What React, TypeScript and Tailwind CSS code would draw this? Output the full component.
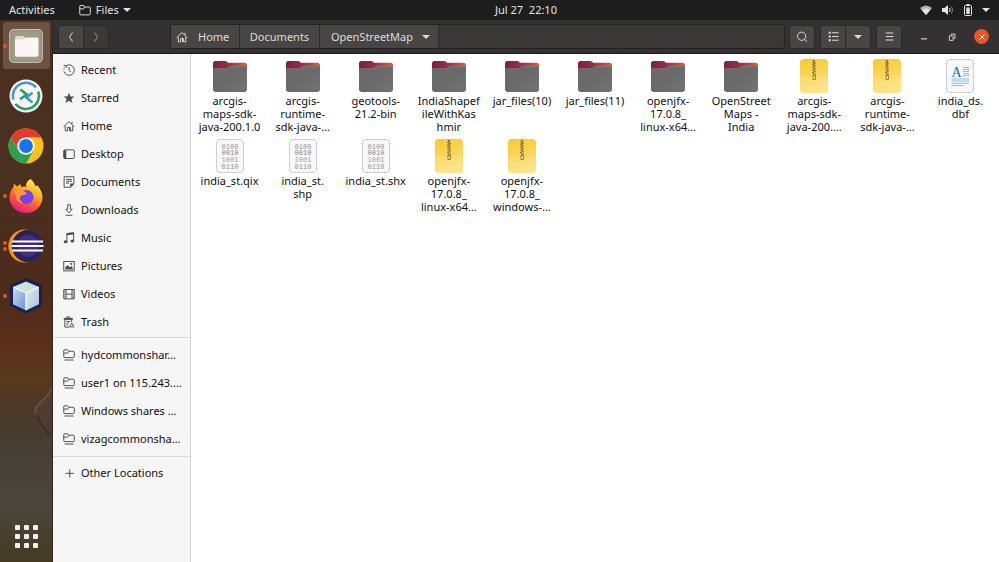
import type { ReactNode } from "react";

// Shared stroke icon wrapper, 16 unit grid
const Glyph = ({
  children,
  className = "size-3",
}: {
  children: ReactNode;
  className?: string;
}) => (
  <svg
    viewBox="0 0 16 16"
    className={`shrink-0 ${className}`}
    fill="none"
    stroke="currentColor"
    strokeWidth="1.3"
    aria-hidden
  >
    {children}
  </svg>
);

const Caret = () => (
  <svg viewBox="0 0 8 4" className="h-1 w-2 shrink-0" fill="currentColor" aria-hidden>
    <path d="M0 0h8L4 4z" />
  </svg>
);

const HomeGlyph = ({ className }: { className?: string }) => (
  <Glyph className={className}>
    <path d="M1 9l7-7 7 7M3 8v6.5h3.2V10h3.6v4.5H13V8" />
    <path d="M8.2 10.5h1.6v4H8.2z" fill="currentColor" stroke="none" />
    <path d="M12 2.5v3" />
  </Glyph>
);

const NetworkFolder = () => (
  <Glyph className="size-3">
    <path d="M1 10V2.2Q1 1 2.200 1H6l1.600 2h6q1.400 0 1.400 1.200v6q0 1.300-1.400 1.300H2.400Q1 11.500 1 10zM1 5.500h5L7.600 3.300" />
    <path d="M2 14.700h12" />
  </Glyph>
);

const places: { name: string; icon: ReactNode }[] = [
  {
    name: "Recent",
    icon: (
      <Glyph>
        <path d="M4 2.4A7 7 0 1 1 1.3 10" />
        <path d="M1.2 8A7 7 0 0 1 3 3.3" strokeDasharray="1.4 1.2" />
        <path d="M8 4v4.5l2.6 2M1 2h3.4v3.4" />
      </Glyph>
    ),
  },
  {
    name: "Starred",
    icon: (
      <Glyph>
        <path
          d="M8 1l2 5h5.3l-4.2 3.4 1.6 5.4L8 11.6l-4.7 3.2 1.6-5.4L.7 6H6z"
          fill="currentColor"
          stroke="none"
        />
      </Glyph>
    ),
  },
  { name: "Home", icon: <HomeGlyph /> },
  {
    name: "Desktop",
    icon: (
      <Glyph>
        <rect x="1" y="2.5" width="14" height="11.5" rx="1.5" />
        <path d="M1 3h3.4v10.8H1z" fill="currentColor" stroke="none" />
      </Glyph>
    ),
  },
  {
    name: "Documents",
    icon: (
      <Glyph>
        <path d="M1.5 1h13v9.5L10 15H1.5zM4 4.5h8M4 7h8M4 9.5h4" />
        <path d="M9.5 15v-5h5z" fill="currentColor" stroke="none" />
      </Glyph>
    ),
  },
  {
    name: "Downloads",
    icon: (
      <Glyph>
        <path d="M6.2 1h3.6v6h2.4L8 12 3.8 7h2.4zM3.5 15h9" />
      </Glyph>
    ),
  },
  {
    name: "Music",
    icon: (
      <Glyph>
        <path d="M5.2 12.8V2l9-1v10.8" />
        <path d="M5 1.8l9.4-1v2.6L5 4.4z" fill="currentColor" stroke="none" />
        <ellipse cx="3.5" cy="13" rx="2.5" ry="2" fill="currentColor" stroke="none" />
        <ellipse cx="12.5" cy="12" rx="2.5" ry="2" fill="currentColor" stroke="none" />
      </Glyph>
    ),
  },
  {
    name: "Pictures",
    icon: (
      <Glyph>
        <rect x="1" y="2" width="14" height="12.5" />
        <path
          d="M3 12.5V10l3-3.5 3 3 2-1.5 2.2 2.5v2zM9.8 4h2.4v2.4H9.8z"
          fill="currentColor"
          stroke="none"
        />
      </Glyph>
    ),
  },
  {
    name: "Videos",
    icon: (
      <Glyph>
        <path d="M1 2h14v12.5H1zM4 2v12.5M12 2v12.5M4 8.2h8" />
        <path d="M2.5 2v12.5M13.5 2v12.5" strokeDasharray="1.5 1.5" />
      </Glyph>
    ),
  },
  {
    name: "Trash",
    icon: (
      <Glyph>
        <path d="M5 3V1.200h4V3M2.500 5v9.800h5.500M11.500 5v3M4.800 7.300h4.700M4.800 9.600h3M4.800 12h2" />
        <path d="M1 2.600h12v2.600H1z" fill="currentColor" stroke="none" />
        <path d="M11.700 9.500l3 5h-6z" />
      </Glyph>
    ),
  },
];

const mounts = ["hydcommonshar…", "user1 on 115.243.…", "Windows shares …", "vizagcommonsha…"];

type Kind = "folder" | "zip" | "binary" | "text";

const files: { label: string; kind: Kind }[] = [
  { label: "arcgis-\nmaps-sdk-\njava-200.1.0", kind: "folder" },
  { label: "arcgis-\nruntime-\nsdk-java-…", kind: "folder" },
  { label: "geotools-\n21.2-bin", kind: "folder" },
  { label: "IndiaShapef\nileWithKas\nhmir", kind: "folder" },
  { label: "jar_files(10)", kind: "folder" },
  { label: "jar_files(11)", kind: "folder" },
  { label: "openjfx-\n17.0.8_\nlinux-x64…", kind: "folder" },
  { label: "OpenStreet\nMaps -\nIndia", kind: "folder" },
  { label: "arcgis-\nmaps-sdk-\njava-200.…", kind: "zip" },
  { label: "arcgis-\nruntime-\nsdk-java-…", kind: "zip" },
  { label: "india_ds.\ndbf", kind: "text" },
  { label: "india_st.qix", kind: "binary" },
  { label: "india_st.\nshp", kind: "binary" },
  { label: "india_st.shx", kind: "binary" },
  { label: "openjfx-\n17.0.8_\nlinux-x64…", kind: "zip" },
  { label: "openjfx-\n17.0.8_\nwindows-…", kind: "zip" },
];

const FileIcon = ({ kind }: { kind: Kind }) => (
  <svg viewBox="0 0 34 34" className="size-[34px]" aria-hidden>
    {kind === "folder" && (
      <>
        <path
          d="M0 12V4.5Q0 2 2.5 2H12q1.5 0 2.5 1.2l.6.6h16.4Q34 3.8 34 6.3V13H0z"
          fill="url(#folder-back)"
        />
        <path
          d="M0 10.5q0-1 1-1h12.2q1.4 0 2.4-1l.8-.8q.8-.8 2-.8H33q1 0 1 1V30q0 2.7-2.7 2.7H2.7Q0 32.7 0 30z"
          fill="url(#folder-front)"
        />
        <path d="M.6 31q.7 1.4 2.1 1.4h28.6q1.4 0 2.1-1.4" fill="none" stroke="#4c4c4c" strokeWidth=".6" />
        <path d="M.5 9.9h12.7q1.4 0 2.4-1l.8-.8q.8-.8 2-.8h15" fill="none" stroke="#8e8583" strokeWidth=".6" />
      </>
    )}
    {kind === "zip" && (
      <>
        <rect x="3" width="28" height="34" rx="3.5" fill="url(#zip-body)" />
        <path d="M3 17h28v13.500Q31 34 27.500 34h-21Q3 34 3 30.500z" fill="#fff" fillOpacity=".12" />
        <path
          d="M16 1l2 1.100-2 1.300 2 1.200-2 1.300 2 1.200-2 1.300 2 1.200-2 1.300 2 1.200-2 1.300 2 1.200-2 1.300"
          fill="none"
          stroke="#6f5f34"
          strokeWidth="1.200"
          strokeDasharray="1.600 .7"
        />
        <rect x="16" y="16.500" width="2.400" height="4" fill="none" stroke="#7d6c3c" strokeWidth=".8" />
      </>
    )}
    {(kind === "binary" || kind === "text") && (
      <rect x="3.500" y=".5" width="27" height="33" rx="3.500" fill="#f8f8f8" stroke="#cfcfcf" />
    )}
    {kind === "binary" && (
      <g fontFamily="'Liberation Mono', monospace" fontSize="7" textAnchor="middle">
        <text x="17" y="9.800" fill="#909090">0100</text>
        <text x="17" y="16.300" fill="#808080">0010</text>
        <text x="17" y="22.900" fill="#a0a0a0">1001</text>
        <text x="17" y="29.500" fill="#909090">0110</text>
      </g>
    )}
    {kind === "text" && (
      <>
        <text
          x="13.500"
          y="18"
          fill="#1d6cab"
          fontFamily="'Liberation Serif', serif"
          fontSize="14"
          textAnchor="middle"
        >
          A
        </text>
        <path
          d="M20 8.500h6M20 10.500h6M20 12.500h6M20 14.500h6M20 16.500h6M8.500 20h17.500M8.500 22h17.500M8.500 24.300h17.500M8.500 26.500h12"
          stroke="#7fc4ee"
        />
      </>
    )}
  </svg>
);

const FilesLogo = () => (
  <svg viewBox="0 0 34 34" className="size-[34px]" aria-hidden>
    <rect x=".7" y=".7" width="32.600" height="32.600" rx="4" fill="#8f8a75" stroke="#c3beab" strokeWidth="1.200" />
    <rect x="2.500" y="2.500" width="29" height="29" rx="3" fill="#a09b86" />
    <path d="M6 9q0-2 2-2h7l2 2.500V16H6z" fill="#dedacf" />
    <path d="M6 12q0-1.600 1.600-1.600h6.800q1 0 1.800-.8l.6-.5q.6-.6 1.500-.6H28q1.500 0 1.500 1.500V26q0 1.800-1.800 1.800H7.800Q6 27.800 6 26z" fill="#f8f7f5" />
  </svg>
);

const RemoteLogo = () => (
  <svg viewBox="0 0 34 34" className="size-[34px]" fill="none" aria-hidden>
    <circle cx="17" cy="17" r="16.500" fill="#f7f6f2" />
    <path d="M4.300 20.500A13.200 13.200 0 0 1 27 8.300" stroke="#4a94d8" strokeWidth="2.600" />
    <path d="M29.300 12.500A13.200 13.200 0 0 1 6.500 25" stroke="#1fa463" strokeWidth="2.600" />
    <path d="M11.500 10.500l6.500 5.200-7 4.300" stroke="#1fa463" strokeWidth="2.600" />
    <path d="M23.500 13.800l-6.300 4.800 6.300 4.900" stroke="#4a94d8" strokeWidth="2.600" />
  </svg>
);

const ChromeLogo = () => (
  <svg viewBox="0 0 36 36" className="size-9" aria-hidden>
    <circle cx="18" cy="18" r="17.500" fill="#fbc116" />
    <path d="M2.800 9.300A17.500 17.500 0 0 1 33.200 9.300H18L10.500 22.300z" fill="#e33b2e" />
    <path d="M2.800 9.300A17.500 17.500 0 0 0 18 35.500l7.600-13.100L18 18l-7.600 4.400z" fill="#2f9e4f" />
    <circle cx="18" cy="18" r="8.700" fill="#fff" />
    <circle cx="18" cy="18" r="6.900" fill="#1a73e8" />
  </svg>
);

const FirefoxLogo = () => (
  <svg viewBox="0 0 34 34" className="size-[34px]" aria-hidden>
    <defs>
      <linearGradient id="fox" x1=".8" y1="0" x2=".3" y2="1">
        <stop offset="0" stopColor="#fff44f" />
        <stop offset=".35" stopColor="#ffb52a" />
        <stop offset=".65" stopColor="#ff5a38" />
        <stop offset="1" stopColor="#e31587" />
      </linearGradient>
    </defs>
    <path
      d="M21.500 0c3 2.500 4 4.500 4.800 7l2.200-.5c3 3.500 5 7.500 5 12A16.500 15.500 0 0 1 .5 18.500C.5 14 2 11 4.500 8L5 4.500l3 3 3.500-2.500.5 3c2.500-.5 4.500-1 6 1C15.500 6 18 2 21.500 0z"
      fill="url(#fox)"
    />
    <circle cx="17.500" cy="18" r="7" fill="#7542e5" />
    <path d="M16 12.500a7 7 0 0 1 8.500 7.500A7 7 0 0 0 16 12.500z" fill="#b54fd0" />
    <path d="M5 12.500c4-2 9-1.500 13 2-2.500 2.500-6 1-7 3.500s1 5 4 6.500c-5 0-8.500-3.500-8-8.500z" fill="#ff9a2e" />
  </svg>
);

const EclipseLogo = () => (
  <svg viewBox="0 0 36 34" className="h-[34px] w-9" aria-hidden>
    <circle cx="16.800" cy="17" r="16.500" fill="#f7941e" />
    <circle cx="20" cy="17" r="16.200" fill="#4d3020" />
    <circle cx="20" cy="17" r="15.500" fill="#2c2255" />
    <circle cx="20" cy="17" r="11" fill="#3f2d87" />
    <path d="M4 12.500h31M3.500 17h32M4 21.500h31" stroke="#fff" strokeWidth="2.200" />
  </svg>
);

const CubeLogo = () => (
  <svg viewBox="0 0 34 36" className="h-9 w-[34px]" strokeLinejoin="round" aria-hidden>
    <path d="M17 2l14.500 6v19L17 34 2.500 27V8z" fill="#1b2a63" stroke="#1b1e52" strokeWidth="3" />
    <path d="M17 3.500l13 5.500-13 6L4 9z" fill="#c9e2de" />
    <path d="M4 9l13 6v17.500L4 26.300z" fill="url(#cube-left)" />
    <path d="M30 9l-13 6v17.500l13-6.200z" fill="url(#cube-right)" />
    <path d="M17 32V15L4.500 9.200M17 15l12.500-5.800" fill="none" stroke="#f4faff" strokeWidth="1.300" />
    <defs>
      <linearGradient id="cube-left" x1="0" y1="0" x2="1" y2="1">
        <stop stopColor="#c2daf5" />
        <stop offset="1" stopColor="#6f93d5" />
      </linearGradient>
      <linearGradient id="cube-right" x1="0" y1="0" x2="1" y2="1">
        <stop stopColor="#e4eef2" />
        <stop offset="1" stopColor="#a9c0d2" />
      </linearGradient>
    </defs>
  </svg>
);

const dockApps: { name: string; windows: number; logo: ReactNode; active?: boolean }[] = [
  { name: "Files", windows: 1, logo: <FilesLogo />, active: true },
  { name: "Remote desktop", windows: 0, logo: <RemoteLogo /> },
  { name: "Chrome", windows: 0, logo: <ChromeLogo /> },
  { name: "Firefox", windows: 1, logo: <FirefoxLogo /> },
  { name: "Eclipse", windows: 2, logo: <EclipseLogo /> },
  { name: "NetBeans", windows: 1, logo: <CubeLogo /> },
];

const TopBar = () => (
  <header className="grid h-5 grid-cols-[1fr_auto_1fr] items-center bg-[#1d1d1d] px-[9px] text-[#e4e4e4]">
    <div className="flex items-center gap-6">
      <button type="button">Activities</button>
      <button type="button" className="flex items-center gap-1">
        <Glyph className="mr-px size-3">
          <path d="M1 13V3.200Q1 2 2.200 2H6l1.600 2H14q1 0 1 1v8q0 1.500-1.500 1.500h-11Q1 14.500 1 13zM1 6.500h5L7.600 4" />
        </Glyph>
        Files
        <Caret />
      </button>
    </div>
    {/* the clock is centred on the area beside the dock */}
    <button type="button" className="ml-[53px] whitespace-pre">
      {"Jul 27  22:10"}
    </button>
    <button type="button" className="flex items-center justify-end gap-2.5" aria-label="System menu">
      <svg viewBox="0 0 12 10" className="h-2.5 w-3" fill="currentColor" aria-hidden>
        <path d="M0 3q6-5 12 0L6 10z" fillOpacity=".75" />
        <path d="M1.800 5q4.200-3 8.400 0L6 10z" />
      </svg>
      <svg viewBox="0 0 12 10" className="h-2.5 w-3" fill="none" stroke="currentColor" aria-hidden>
        <path d="M0 3h2.500L6 0v10L2.500 7H0z" fill="currentColor" stroke="none" />
        <path d="M7.500 3q1.300 2 0 4" />
        <path d="M9.500 1.500q2.200 3.500 0 7" strokeOpacity=".5" />
      </svg>
      <svg viewBox="0 0 8 12" className="h-3 w-2" fill="none" stroke="currentColor" aria-hidden>
        <rect x=".5" y="1.500" width="7" height="10" rx="1" />
        <path d="M2.500 .5h3" />
        <path d="M2.300 3.500h3.400v6.500H2.300z" fill="currentColor" stroke="none" />
      </svg>
      <Caret />
    </button>
  </header>
);

const Dock = () => (
  <nav
    aria-label="Dock"
    className="relative flex w-[53px] shrink-0 flex-col items-center overflow-hidden border-r border-[#30251e] bg-[linear-gradient(#4b2f20_0%,#49301f_30%,#4d2b1b_50%,#592f18_60%,#593a1b_66%,#49392b_73%,#47413a_82%,#4b463a_90%,#443a22_100%)] pt-0.5"
  >
    {/* wallpaper detail showing through the dock */}
    <svg viewBox="0 0 18 54" className="absolute top-[366px] right-0 h-[54px] w-[18px]" aria-hidden>
      <path d="M18 2Q14 10 6 17Q0 22 1 29Q5 40 18 53V32Q15 26 18 20z" fill="#513c32" />
      <path d="M18 2Q14 10 6 17Q1 21 1 28" fill="none" stroke="#6b554a" strokeWidth="1.500" />
      <path d="M3 30Q7 40 17 50" fill="none" stroke="#412a1f" strokeWidth="2" />
    </svg>
    <ul className="flex w-full flex-col items-center gap-[3px]">
      {dockApps.map((app) => (
        <li key={app.name} className="flex w-full justify-center">
          <button
            type="button"
            aria-label={app.name}
            className={`relative flex h-[47px] w-[47px] items-center justify-center rounded-[3px] ${app.active ? "bg-[#6c5245]" : ""}`}
          >
            <span className="absolute inset-y-0 left-0 flex flex-col justify-center gap-0.5">
              {Array.from({ length: app.windows }).map((_, i) => (
                <span key={i} className="size-1 rounded-full bg-[#e95420]" />
              ))}
            </span>
            {app.logo}
          </button>
        </li>
      ))}
    </ul>
    <button
      type="button"
      aria-label="Show applications"
      className="mt-auto mb-[14px] grid grid-cols-3 gap-1"
    >
      {Array.from({ length: 9 }).map((_, i) => (
        <span key={i} className="size-[5px] rounded-[1px] bg-[#f2f0ee]" />
      ))}
    </button>
  </nav>
);

const toolButton =
  "flex h-6 items-center justify-center border border-[#2b2929] bg-[#484644] text-[#dedcda]";

const HeaderBar = () => (
  <div className="flex h-[34px] items-center border-b border-[#1a1819] bg-[#343132] pr-2.5 pl-[5px] text-[#dedcda]">
    <div className="flex">
      <button type="button" aria-label="Back" className={`${toolButton} w-[26px] rounded-l-[3px]`}>
        <Glyph>
          <path d="M10 2L6 8l4 6" />
        </Glyph>
      </button>
      <button
        type="button"
        aria-label="Forward"
        disabled
        className="-ml-px flex h-6 w-[26px] items-center justify-center rounded-r-[3px] border border-[#2b2929] bg-[#3b3938] text-[#918f8d]"
      >
        <Glyph>
          <path d="M6 2l4 6-4 6" />
        </Glyph>
      </button>
    </div>

    <nav
      aria-label="Path"
      className="ml-[61px] flex h-[25px] min-w-0 flex-1 overflow-hidden rounded-[3px] border border-[#232122] bg-[#3a3837]"
    >
      <button type="button" className="flex w-[69px] items-center gap-2.5 border-r border-[#2d2b2b] bg-[#484644] pl-[5px]">
        <HomeGlyph className="size-3" />
        Home
      </button>
      <button type="button" className="w-20 border-r border-[#2d2b2b] bg-[#484644]">
        Documents
      </button>
      <button
        type="button"
        className="flex w-[119px] items-center justify-between border-r border-[#2d2b2b] bg-[#484644] pr-2 pl-[11px]"
      >
        OpenStreetMap
        <Caret />
      </button>
    </nav>

    <button type="button" aria-label="Search" className={`${toolButton} ml-1 w-[26px] rounded-[3px]`}>
      <Glyph>
        <circle cx="7.500" cy="7" r="5.500" />
        <path d="M11.300 11l3.500 3.500" />
      </Glyph>
    </button>
    <div className="ml-[5px] flex">
      <button type="button" aria-label="List view" className={`${toolButton} w-[26px] rounded-l-[3px]`}>
        <Glyph className="size-[11px]">
          <path d="M1 2.500h3M1 8h3M1 13.500h3" strokeWidth="3" />
          <path d="M6 2.500h9.500M6 8h9.500M6 13.500h9.500" strokeWidth="1.500" />
        </Glyph>
      </button>
      <button type="button" aria-label="View options" className={`${toolButton} -ml-px w-[26px] rounded-r-[3px]`}>
        <Caret />
      </button>
    </div>
    <button type="button" aria-label="Menu" className={`${toolButton} ml-[5px] w-[26px] rounded-[3px]`}>
      <Glyph className="size-[11px]">
        <path d="M2.500 3h11M2.500 8h11M2.500 13h11" strokeWidth="1.500" />
      </Glyph>
    </button>

    <div className="ml-4 flex items-center gap-4">
      <button type="button" aria-label="Minimize">
        <Glyph>
          <path d="M4 10.500h8" strokeWidth="1.500" />
        </Glyph>
      </button>
      <button type="button" aria-label="Restore">
        <Glyph>
          <path d="M4.500 6.500h5v6h-5zM7 6V4h5v6h-2" strokeWidth="1.200" />
        </Glyph>
      </button>
      <button
        type="button"
        aria-label="Close"
        className="flex size-[15px] items-center justify-center rounded-full bg-[#e95420] text-white"
      >
        <Glyph className="size-2">
          <path d="M3 3l10 10M13 3L3 13" strokeWidth="2" />
        </Glyph>
      </button>
    </div>
  </div>
);

const PlaceLink = ({ name, icon }: { name: string; icon: ReactNode }) => (
  <li>
    <a href="#" className="flex h-7 items-center gap-1.5 pr-1 pl-2.5">
      <span className="text-[#4c4c4c]">{icon}</span>
      <span className="whitespace-nowrap">{name}</span>
    </a>
  </li>
);

const Sidebar = () => (
  <aside className="w-[138px] shrink-0 border-r border-[#d6d6d6] bg-[#f6f6f6] pt-0.5 text-[#101010]">
    <ul className="pb-px">
      {places.map((place) => (
        <PlaceLink key={place.name} name={place.name} icon={place.icon} />
      ))}
    </ul>
    <ul className="border-t border-[#d9d9d9] py-[3px]">
      {mounts.map((name) => (
        <PlaceLink key={name} name={name} icon={<NetworkFolder />} />
      ))}
    </ul>
    <ul className="border-t border-[#d9d9d9] pt-0.5">
      <PlaceLink
        name="Other Locations"
        icon={
          <Glyph>
            <path d="M9 3v11M3.500 8.500h11" />
          </Glyph>
        }
      />
    </ul>
  </aside>
);

const App = () => (
  <div className="flex min-h-screen flex-col bg-white font-['Noto_Sans',sans-serif] text-[11px] leading-4">
    {/* gradients shared by the file icons */}
    <svg className="absolute size-0" aria-hidden>
      <defs>
        <linearGradient id="folder-back">
          <stop stopColor="#77214f" />
          <stop offset=".45" stopColor="#93304a" />
          <stop offset="1" stopColor="#ee5a24" />
        </linearGradient>
        <linearGradient id="folder-front" x1="0" y1="0" x2="1" y2="1">
          <stop stopColor="#696969" />
          <stop offset=".5" stopColor="#6a6a6a" />
          <stop offset="1" stopColor="#747474" />
        </linearGradient>
        <linearGradient id="zip-body" x1="0" y1="0" x2=".3" y2="1">
          <stop stopColor="#fbc92e" />
          <stop offset="1" stopColor="#fde07a" />
        </linearGradient>
      </defs>
    </svg>
    <TopBar />
    <div className="flex flex-1">
      <Dock />
      <div className="flex min-w-0 flex-1 flex-col">
        <HeaderBar />
        <div className="flex flex-1">
          <Sidebar />
          <main className="min-w-0 flex-1 px-0.5 pt-[5px]">
            <ul className="grid auto-rows-[80px] grid-cols-[repeat(auto-fill,minmax(73px,1fr))]">
              {files.map((file, i) => (
                <li key={i}>
                  <button type="button" className="flex w-full flex-col items-center gap-px text-[#101010]">
                    <FileIcon kind={file.kind} />
                    <span className="leading-[13px] whitespace-pre">{file.label}</span>
                  </button>
                </li>
              ))}
            </ul>
          </main>
        </div>
      </div>
    </div>
  </div>
);

export default App;
